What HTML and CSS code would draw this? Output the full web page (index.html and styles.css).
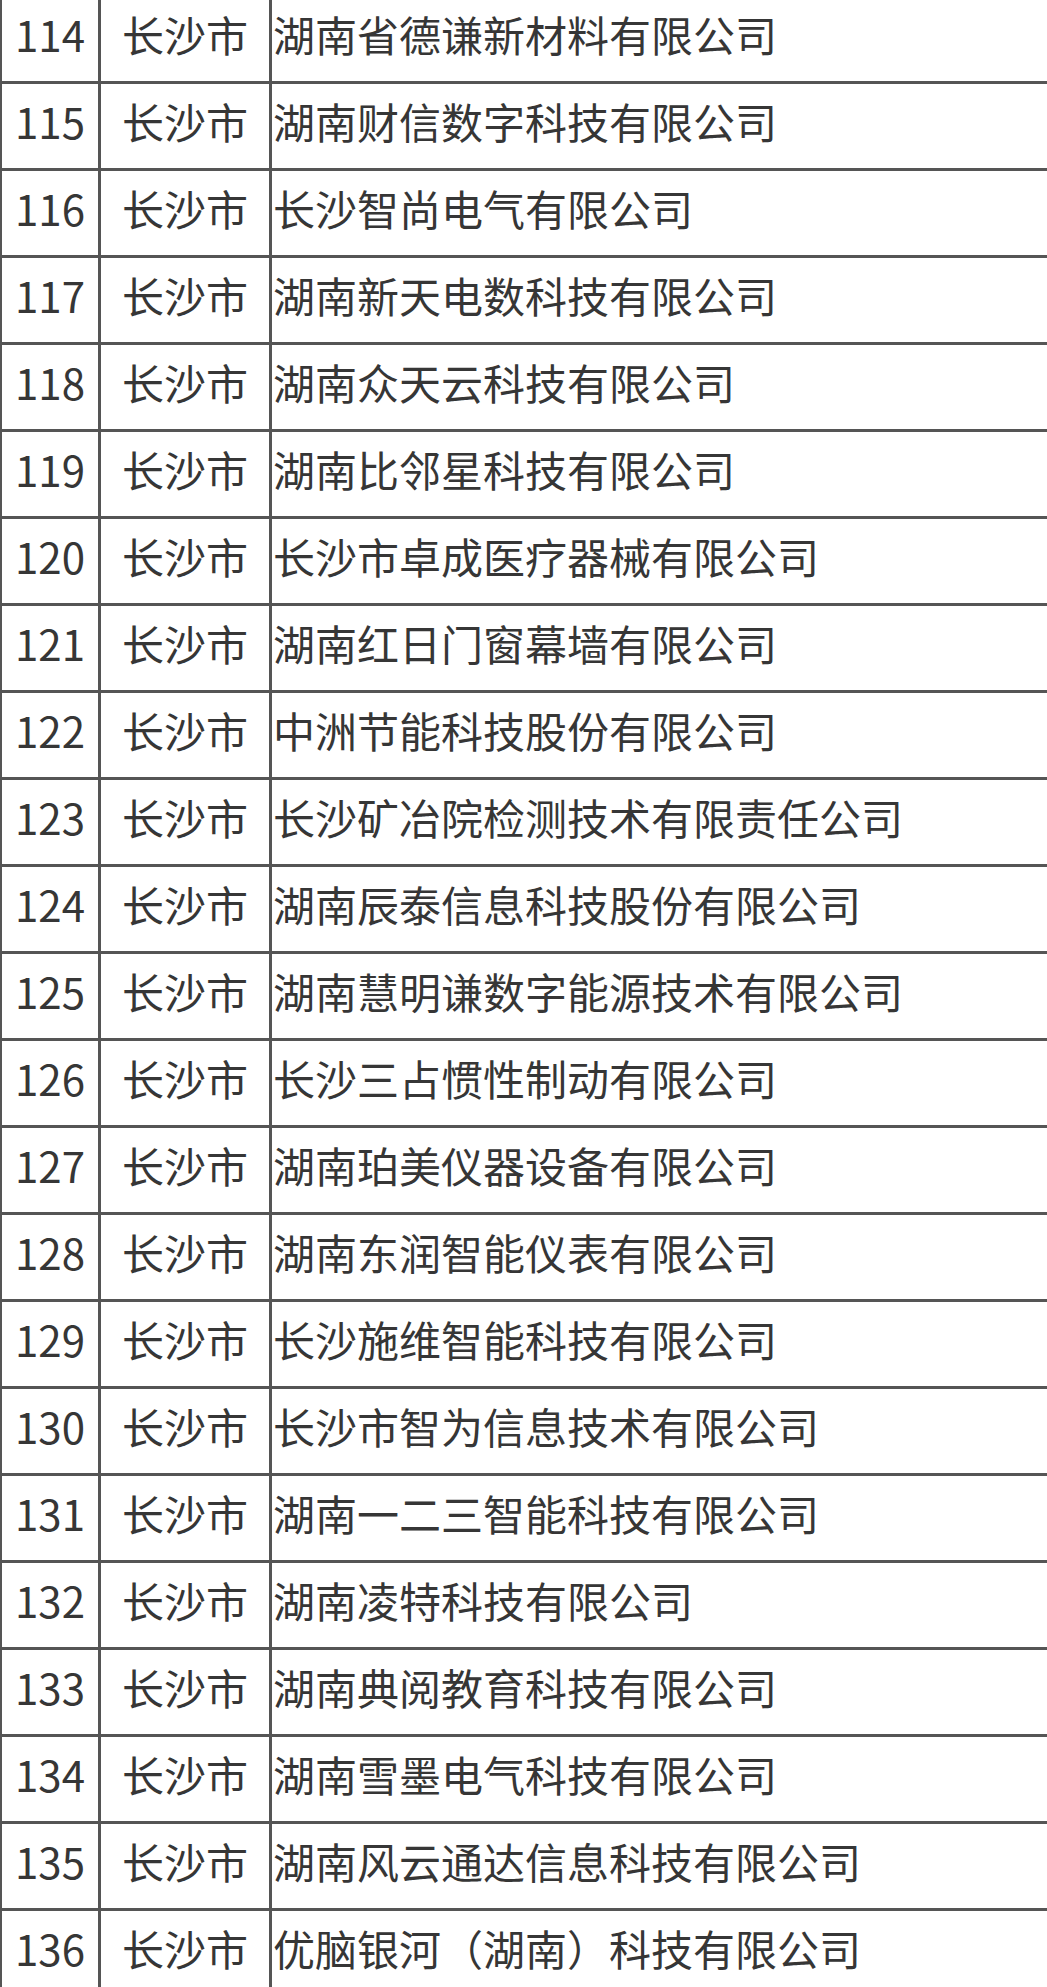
FILE: index.html
```html
<!DOCTYPE html>
<html lang="zh-CN">
<head>
<meta charset="utf-8">
<title>名单</title>
<link rel="stylesheet" href="styles.css">
</head>
<body>
<div class="list">
  <div class="cell num">114</div><div class="cell city">长沙市</div><div class="cell name">湖南省德谦新材料有限公司</div>
  <div class="cell num">115</div><div class="cell city">长沙市</div><div class="cell name">湖南财信数字科技有限公司</div>
  <div class="cell num">116</div><div class="cell city">长沙市</div><div class="cell name">长沙智尚电气有限公司</div>
  <div class="cell num">117</div><div class="cell city">长沙市</div><div class="cell name">湖南新天电数科技有限公司</div>
  <div class="cell num">118</div><div class="cell city">长沙市</div><div class="cell name">湖南众天云科技有限公司</div>
  <div class="cell num">119</div><div class="cell city">长沙市</div><div class="cell name">湖南比邻星科技有限公司</div>
  <div class="cell num">120</div><div class="cell city">长沙市</div><div class="cell name">长沙市卓成医疗器械有限公司</div>
  <div class="cell num">121</div><div class="cell city">长沙市</div><div class="cell name">湖南红日门窗幕墙有限公司</div>
  <div class="cell num">122</div><div class="cell city">长沙市</div><div class="cell name">中洲节能科技股份有限公司</div>
  <div class="cell num">123</div><div class="cell city">长沙市</div><div class="cell name">长沙矿冶院检测技术有限责任公司</div>
  <div class="cell num">124</div><div class="cell city">长沙市</div><div class="cell name">湖南辰泰信息科技股份有限公司</div>
  <div class="cell num">125</div><div class="cell city">长沙市</div><div class="cell name">湖南慧明谦数字能源技术有限公司</div>
  <div class="cell num">126</div><div class="cell city">长沙市</div><div class="cell name">长沙三占惯性制动有限公司</div>
  <div class="cell num">127</div><div class="cell city">长沙市</div><div class="cell name">湖南珀美仪器设备有限公司</div>
  <div class="cell num">128</div><div class="cell city">长沙市</div><div class="cell name">湖南东润智能仪表有限公司</div>
  <div class="cell num">129</div><div class="cell city">长沙市</div><div class="cell name">长沙施维智能科技有限公司</div>
  <div class="cell num">130</div><div class="cell city">长沙市</div><div class="cell name">长沙市智为信息技术有限公司</div>
  <div class="cell num">131</div><div class="cell city">长沙市</div><div class="cell name">湖南一二三智能科技有限公司</div>
  <div class="cell num">132</div><div class="cell city">长沙市</div><div class="cell name">湖南凌特科技有限公司</div>
  <div class="cell num">133</div><div class="cell city">长沙市</div><div class="cell name">湖南典阅教育科技有限公司</div>
  <div class="cell num">134</div><div class="cell city">长沙市</div><div class="cell name">湖南雪墨电气科技有限公司</div>
  <div class="cell num">135</div><div class="cell city">长沙市</div><div class="cell name">湖南风云通达信息科技有限公司</div>
  <div class="cell num">136</div><div class="cell city">长沙市</div><div class="cell name">优脑银河（湖南）科技有限公司</div>
</div>
</body>
</html>
```

FILE: styles.css
```css
html, body {
  margin: 0;
  padding: 0;
  background: #ffffff;
  overflow: hidden;
}

.list {
  width: 1047px;
  box-sizing: border-box;
  margin-top: -3px;
  padding-left: 2px;
  display: grid;
  grid-template-columns: 96px 168px 1fr;
  grid-auto-rows: 84px;
  gap: 3px;
  background: #555555;
  font-family: "Noto Sans CJK SC", "Noto Sans", sans-serif;
  font-size: 42px;
  color: #363636;
}

.cell {
  background: #ffffff;
  display: flex;
  align-items: center;
  white-space: nowrap;
  overflow: hidden;
  padding-bottom: 11px;
  box-sizing: border-box;
}

.num,
.city {
  justify-content: center;
}

.name {
  padding-left: 1px;
}
```
